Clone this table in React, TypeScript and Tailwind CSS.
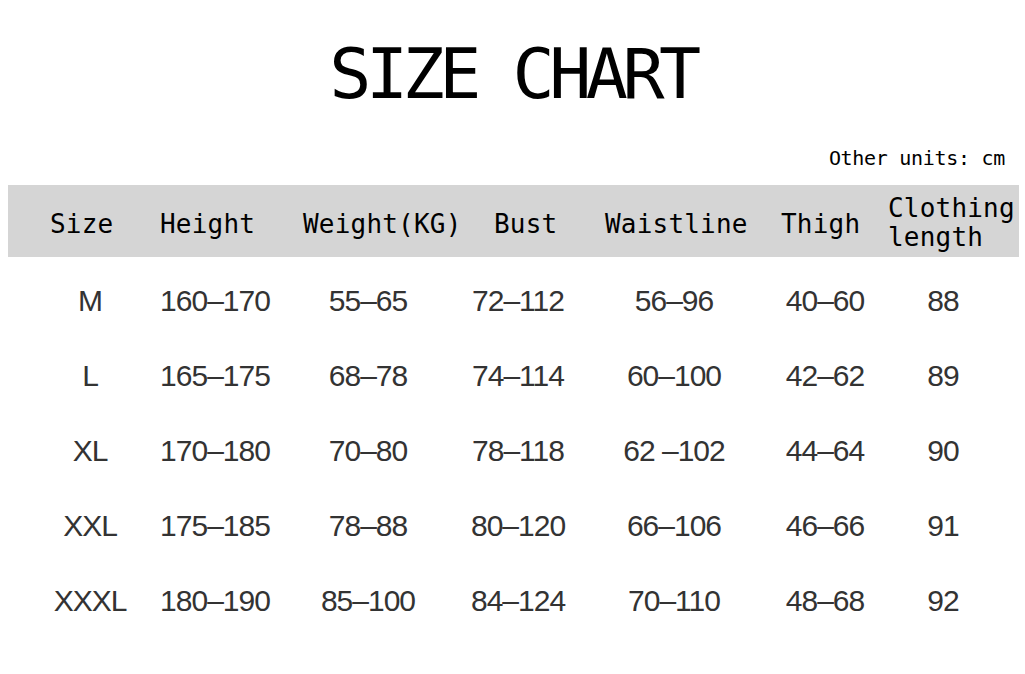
import React from "react";

const rows = [
  ["M", "160–170", "55–65", "72–112", "56–96", "40–60", "88"],
  ["L", "165–175", "68–78", "74–114", "60–100", "42–62", "89"],
  ["XL", "170–180", "70–80", "78–118", "62 –102", "44–64", "90"],
  ["XXL", "175–185", "78–88", "80–120", "66–106", "46–66", "91"],
  ["XXXL", "180–190", "85–100", "84–124", "70–110", "48–68", "92"],
];

const mono = "font-['DejaVu_Sans_Mono','Liberation_Mono',monospace]";

export default function App() {
  return (
    <div className="w-[1025px] h-[674px] bg-white overflow-hidden">
      <div className={`${mono} pt-[37px] text-center text-[70px] leading-[74px] tracking-[-5.5px] text-black`}>
        SIZE CHART
      </div>
      <div className={`${mono} mt-[35px] pr-[20px] text-right text-[20px] leading-[24px] tracking-[-0.3px] text-black`}>
        Other units: cm
      </div>
      <div
        className={`${mono} mt-[15px] ml-[8px] w-[1011px] h-[72px] bg-[#d5d5d5] grid grid-cols-[110px_143px_191px_111px_176px_107px_1fr] items-center pl-[42px] pt-[6px] text-[26px] leading-[29px] tracking-[0.2px] text-black`}
      >
        <div>Size</div>
        <div>Height</div>
        <div>Weight(KG)</div>
        <div>Bust</div>
        <div>Waistline</div>
        <div>Thigh</div>
        <div className="pb-[2px]">
          Clothing
          <br />
          length
        </div>
      </div>
      <div className="pt-[6px] font-['Liberation_Sans',Arial,sans-serif] text-[30px] tracking-[-1px] text-[#333333]">
        {rows.map((r) => (
          <div
            key={r[0]}
            className="ml-[8px] h-[75px] grid grid-cols-[164px_86px_220px_80px_232px_70px_166px] items-center"
          >
            {r.map((c, i) => (
              <div key={i} className="flex justify-center whitespace-nowrap">
                {c}
              </div>
            ))}
          </div>
        ))}
      </div>
    </div>
  );
}
